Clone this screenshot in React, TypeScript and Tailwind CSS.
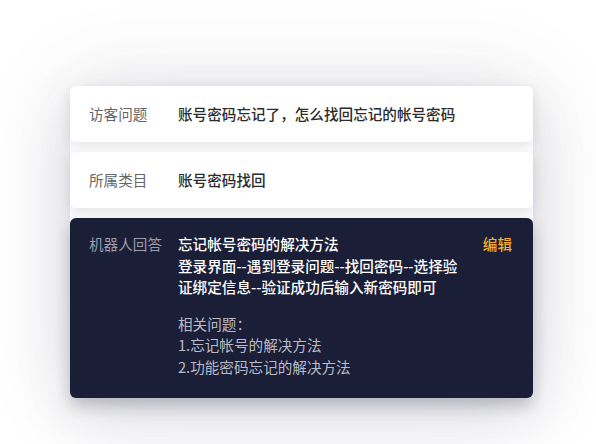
const font = { fontFamily: '"Noto Sans CJK SC", "Noto Sans", sans-serif' };

const Row = ({ label, value }: { label: string; value: string }) => (
  <div className="flex items-center h-[56px] bg-white rounded-[6px] pl-[19px] shadow-[0_4px_12px_rgba(40,40,70,0.13)]">
    <div className="w-[89px] text-[14.6px] text-[#666]">{label}</div>
    <div className="text-[14.6px] font-medium text-[#2b2b2b]">{value}</div>
  </div>
);

export default function App() {
  return (
    <div className="w-[596px] h-[444px] bg-white overflow-hidden relative" style={font}>
      <div className="pt-[86px] pl-[70px]">
        <div className="w-[463px] flex flex-col gap-[10px] rounded-[8px] shadow-[0_0_90px_rgba(40,40,70,0.13),0_20px_60px_rgba(40,40,70,0.10)]">
          <Row label="访客问题" value="账号密码忘记了，怎么找回忘记的帐号密码" />
          <Row label="所属类目" value="账号密码找回" />
          <div className="flex bg-[#1a1e36] rounded-[6px] pl-[19px] pr-[21px] pt-[15px] pb-[21px] leading-[21.5px] text-[14.6px] shadow-[0_8px_16px_rgba(20,20,50,0.22)]">
            <div className="w-[89px] text-[#9a9cab]">机器人回答</div>
            <div className="w-[284px]">
              <div className="text-white font-medium">
                忘记帐号密码的解决方法
                <br />
                登录界面--遇到登录问题--找回密码--选择验证绑定信息--验证成功后输入新密码即可
              </div>
              <div className="mt-[15px] text-[#b9bbc6]">
                相关问题：
                <br />
                1.忘记帐号的解决方法
                <br />
                2.功能密码忘记的解决方法
              </div>
            </div>
            <div className="ml-auto text-[#f5b025] font-medium">编辑</div>
          </div>
        </div>
      </div>
    </div>
  );
}
